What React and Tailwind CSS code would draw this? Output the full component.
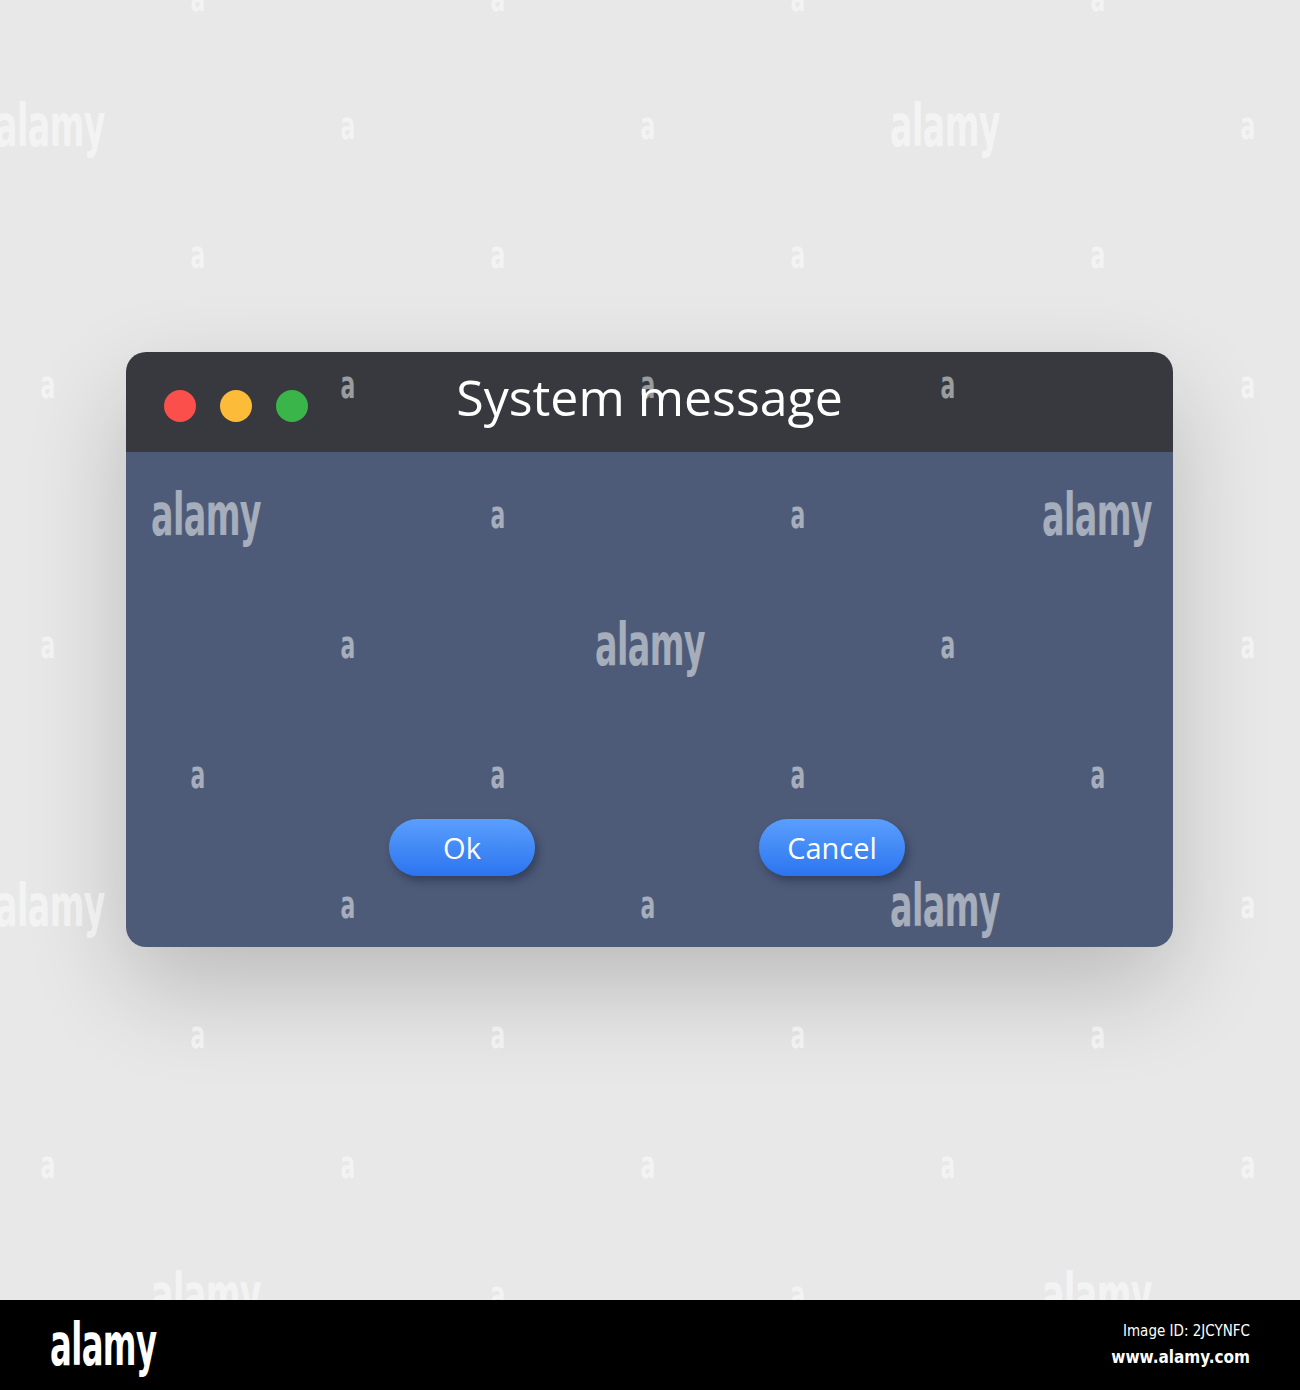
const marks = [
  // [x, y] centers in page coords
  [50, 126], [945, 126],
  [206, 515], [1097, 515],
  [650, 645],
  [50, 906], [945, 906],
  [206, 1295], [1097, 1295],
];

const smallRows = [
  [-2, [198, 498, 798, 1098]],
  [126, [348, 648, 1248]],
  [255, [198, 498, 798, 1098]],
  [385, [48, 348, 648, 948, 1248]],
  [515, [498, 798]],
  [645, [48, 348, 948, 1248]],
  [775, [198, 498, 798, 1098]],
  [905, [348, 648, 1248]],
  [1035, [198, 498, 798, 1098]],
  [1165, [48, 348, 648, 948, 1248]],
  [1295, [498, 798]],
];

const wmFont = { fontFamily: '"DejaVu Sans Condensed", "DejaVu Sans", sans-serif' };

function Watermarks() {
  return (
    <div className="pointer-events-none absolute inset-0 overflow-hidden">
      {marks.map(([x, y], i) => (
        <span
          key={'l' + i}
          className="absolute font-bold leading-none text-white/50 text-[58px] tracking-[-1px]"
          style={{ ...wmFont, left: x, top: y, transform: 'translate(-50%, -50%) scaleX(0.64)' }}
        >
          alamy
        </span>
      ))}
      {smallRows.flatMap(([y, xs]) =>
        xs.map((x) => (
          <span
            key={x + '-' + y}
            className="absolute font-bold leading-none text-white/50 text-[38px]"
            style={{ ...wmFont, left: x, top: y, transform: 'translate(-50%, -50%) scaleX(0.64)' }}
          >
            a
          </span>
        ))
      )}
    </div>
  );
}

function PillButton({ children }) {
  return (
    <button
      type="button"
      className="flex h-[57px] w-[146px] items-center justify-center rounded-full bg-gradient-to-b from-[#5a9ffd] to-[#2c74ef] text-[29px] text-white shadow-[3px_5px_8px_rgba(20,30,60,0.45)]"
    >
      {children}
    </button>
  );
}

export default function App() {
  return (
    <div className="w-[1300px] bg-[#e8e8e8]" style={{ fontFamily: '"Open Sans", "Noto Sans", sans-serif' }}>
      <div className="relative h-[1300px] overflow-hidden pt-[352px] pl-[126px]">
        <div className="w-[1047px] overflow-hidden rounded-[20px] shadow-[0_40px_100px_rgba(0,0,0,0.2)]">
          <div className="relative flex h-[100px] items-center bg-[#38393e] pl-[38px]">
            <div className="flex gap-[24px] pt-[8px]">
              <span className="h-[32px] w-[32px] rounded-full bg-[#fb4f4c]" />
              <span className="h-[32px] w-[32px] rounded-full bg-[#fdbb3a]" />
              <span className="h-[32px] w-[32px] rounded-full bg-[#3ab54a]" />
            </div>
            <div className="absolute inset-0 flex items-center justify-center pb-[10px] text-[50px] text-white">
              System message
            </div>
          </div>
          <div className="flex h-[495px] gap-[224px] bg-[#4e5b78] pt-[367px] pl-[263px]">
            <PillButton>Ok</PillButton>
            <PillButton>Cancel</PillButton>
          </div>
        </div>
        <Watermarks />
      </div>
      <div className="flex h-[90px] items-center justify-between bg-black pl-[50px] pr-[50px]">
        <span
          className="origin-left font-bold leading-none text-white text-[58px] tracking-[-1px]"
          style={{ ...wmFont, transform: 'scaleX(0.62)' }}
        >
          alamy
        </span>
        <div className="flex flex-col items-end gap-[2px] text-white" style={{ fontFamily: '"DejaVu Sans Condensed", "DejaVu Sans", sans-serif' }}>
          <span className="text-[15px]">Image ID: 2JCYNFC</span>
          <span className="text-[17px] font-bold">www.alamy.com</span>
        </div>
      </div>
    </div>
  );
}
